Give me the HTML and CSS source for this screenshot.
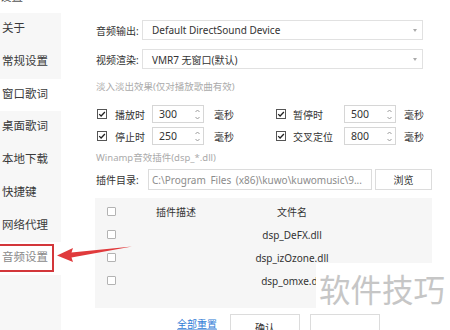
FILE: index.html
```html
<!DOCTYPE html>
<html lang="zh">
<head>
<meta charset="utf-8">
<link rel="stylesheet" href="styles.css">
</head>
<body>
<div class="app">
  <aside class="sidebar">
    <div class="cut-title"><span>设置</span></div>
    <ul class="nav">
      <li class="nav-item">关于</li>
      <li class="nav-item">常规设置</li>
      <li class="nav-item light">窗口歌词</li>
      <li class="nav-item">桌面歌词</li>
      <li class="nav-item">本地下载</li>
      <li class="nav-item">快捷键</li>
      <li class="nav-item">网络代理</li>
      <li class="nav-item active">音频设置</li>
    </ul>
  </aside>

  <main class="content">
    <div class="field-row">
      <span class="label">音频输出:</span>
      <div class="select"><span>Default DirectSound Device</span><i class="caret"></i></div>
    </div>
    <div class="field-row second">
      <span class="label">视频渲染:</span>
      <div class="select"><span>VMR7 无窗口(默认)</span><i class="caret"></i></div>
    </div>

    <div class="hint fade-hint">淡入淡出效果(仅对播放歌曲有效)</div>

    <div class="spin-row">
      <div class="spin-group g1">
        <svg class="cb" width="10" height="10" viewBox="0 0 10 10"><rect x="0.5" y="0.5" width="9" height="9" fill="#fff" stroke="#555"/><path d="M2.2 5.1l1.9 1.9 3.8-4" stroke="#222" stroke-width="1.3" fill="none"/></svg>
        <span class="spin-label">播放时</span>
        <div class="spin"><span>300</span><span class="arrows"><svg width="5" height="11" viewBox="0 0 5 11"><path d="M0.5 3l2-2 2 2M0.5 8l2 2 2-2" stroke="#9a9a9a" fill="none"/></svg></span></div>
        <span class="unit">毫秒</span>
      </div>
      <div class="spin-group g2">
        <svg class="cb" width="10" height="10" viewBox="0 0 10 10"><rect x="0.5" y="0.5" width="9" height="9" fill="#fff" stroke="#555"/><path d="M2.2 5.1l1.9 1.9 3.8-4" stroke="#222" stroke-width="1.3" fill="none"/></svg>
        <span class="spin-label">暂停时</span>
        <div class="spin"><span>500</span><span class="arrows"><svg width="5" height="11" viewBox="0 0 5 11"><path d="M0.5 3l2-2 2 2M0.5 8l2 2 2-2" stroke="#9a9a9a" fill="none"/></svg></span></div>
        <span class="unit">毫秒</span>
      </div>
    </div>
    <div class="spin-row second">
      <div class="spin-group g1">
        <svg class="cb" width="10" height="10" viewBox="0 0 10 10"><rect x="0.5" y="0.5" width="9" height="9" fill="#fff" stroke="#555"/><path d="M2.2 5.1l1.9 1.9 3.8-4" stroke="#222" stroke-width="1.3" fill="none"/></svg>
        <span class="spin-label">停止时</span>
        <div class="spin"><span>250</span><span class="arrows"><svg width="5" height="11" viewBox="0 0 5 11"><path d="M0.5 3l2-2 2 2M0.5 8l2 2 2-2" stroke="#9a9a9a" fill="none"/></svg></span></div>
        <span class="unit">毫秒</span>
      </div>
      <div class="spin-group g2">
        <svg class="cb" width="10" height="10" viewBox="0 0 10 10"><rect x="0.5" y="0.5" width="9" height="9" fill="#fff" stroke="#555"/><path d="M2.2 5.1l1.9 1.9 3.8-4" stroke="#222" stroke-width="1.3" fill="none"/></svg>
        <span class="spin-label">交叉定位</span>
        <div class="spin"><span>800</span><span class="arrows"><svg width="5" height="11" viewBox="0 0 5 11"><path d="M0.5 3l2-2 2 2M0.5 8l2 2 2-2" stroke="#9a9a9a" fill="none"/></svg></span></div>
        <span class="unit">毫秒</span>
      </div>
    </div>

    <div class="hint winamp-hint">Winamp音效插件(dsp_*.dll)</div>

    <div class="dir-row">
      <span class="dir-label">插件目录:</span>
      <div class="path-input">C:\Program Files (x86)\kuwo\kuwomusic\9...</div>
      <div class="btn browse">浏览</div>
    </div>

    <div class="plugin-table">
      <div class="trow thead">
        <span class="cell c-check"><i class="box"></i></span>
        <span class="cell c-desc">插件描述</span>
        <span class="cell c-name">文件名</span>
      </div>
      <div class="trow">
        <span class="cell c-check"><i class="box"></i></span>
        <span class="cell c-desc"></span>
        <span class="cell c-name">dsp_DeFX.dll</span>
      </div>
      <div class="trow">
        <span class="cell c-check"><i class="box"></i></span>
        <span class="cell c-desc"></span>
        <span class="cell c-name">dsp_izOzone.dll</span>
      </div>
      <div class="trow">
        <span class="cell c-check"><i class="box"></i></span>
        <span class="cell c-desc"></span>
        <span class="cell c-name">dsp_omxe.dll</span>
      </div>
    </div>

    <div class="footer">
      <a class="reset-link">全部重置</a>
      <div class="btn ok">确认</div>
      <div class="btn cancel"></div>
    </div>
  </main>

  <div class="highlight-box"></div>
  <svg class="arrow" width="450" height="330" viewBox="0 0 450 330">
    <polygon points="57,255.5 73,248 71.5,252.5 132,246.5 71.5,257.5 73,262" fill="#e03a3c"/>
  </svg>
  <div class="watermark">软件技巧</div>
</div>
</body>
</html>
```

FILE: styles.css
```css
* { box-sizing: border-box; }
html, body { margin: 0; padding: 0; background: #fff; }
body {
  font-family: "Noto Sans", "Noto Sans CJK SC", sans-serif;
  font-size: 10px;
  color: #333;
}
.app {
  position: relative;
  width: 450px;
  height: 330px;
  display: flex;
  overflow: hidden;
}

/* sidebar */
.sidebar {
  width: 61px;
  flex: none;
  display: flex;
  flex-direction: column;
}
.cut-title {
  height: 13px;
  flex: none;
  overflow: hidden;
  font-size: 11.5px;
  background: #fff;
}
.cut-title span {
  display: block;
  margin-top: -9px;
  line-height: 12px;
  color: #555;
}
.nav {
  list-style: none;
  margin: 0;
  padding: 0;
  flex: 1;
  background: #f7f7f7;
}
.nav-item {
  height: 32.75px;
  line-height: 30px;
  padding-left: 2px;
  font-size: 11.5px;
  color: #3a3a3a;
  white-space: nowrap;
}
.nav-item.light { background: #fff; }
.nav-item.active { background: #fff; color: #8a8a8a; }

/* content */
.content {
  flex: 1;
  padding: 20px 0 0 35px;
  display: flex;
  flex-direction: column;
}
.content > * { flex-shrink: 0; }
.field-row {
  display: flex;
  align-items: center;
  height: 20px;
}
.field-row.second { margin-top: 9px; }
.label { width: 46px; flex: none; }
.select {
  width: 281px;
  height: 20px;
  border: 1px solid #e1e1e1;
  display: flex;
  align-items: center;
  padding-left: 9px;
  white-space: nowrap;
}
.caret {
  margin-left: auto;
  margin-right: 5px;
  width: 0;
  height: 0;
  border-left: 2.5px solid transparent;
  border-right: 2.5px solid transparent;
  border-top: 3px solid #aaa;
}

.hint {
  font-size: 9.5px;
  color: #aaa;
  height: 14px;
  line-height: 14px;
  white-space: nowrap;
}
.fade-hint { margin-top: 11px; }
.winamp-hint { margin-top: 6px; }

.spin-row {
  display: flex;
  align-items: center;
  height: 18px;
  margin-top: 11px;
}
.spin-row.second { margin-top: 4px; }
.spin-group { display: flex; align-items: center; }
.spin-group.g1 { width: 180px; }
.cb { flex: none; display: block; }
.g1 .cb { margin-left: 1px; }
.spin-label { white-space: nowrap; }
.g1 .spin-label { margin-left: 8px; width: 37px; }
.g2 .spin-label { margin-left: 7px; width: 51px; }
.spin {
  width: 52px;
  height: 18px;
  border: 1px solid #d6d6d6;
  display: flex;
  align-items: center;
  padding-left: 6px;
  font-size: 10.5px;
  color: #333;
}
.arrows { margin-left: auto; margin-right: 3px; display: flex; }
.arrows svg { display: block; }
.g1 .unit { margin-left: 10px; }
.g2 .unit { margin-left: 8px; }

.dir-row {
  display: flex;
  align-items: center;
  height: 21px;
  margin-top: 4px;
}
.dir-label { width: 52px; flex: none; }
.path-input {
  width: 224px;
  height: 21px;
  border: 1px solid #dcdcdc;
  padding-left: 3px;
  display: flex;
  align-items: center;
  color: #8c8c8c;
  white-space: nowrap;
  overflow: hidden;
  word-spacing: 2px;
}
.btn {
  border: 1px solid #dcdcdc;
  background: #fff;
  display: flex;
  align-items: center;
  justify-content: center;
  color: #333;
}
.browse { width: 57px; height: 21px; margin-left: 3px; }

.plugin-table {
  margin: 8px 0 0 -1px;
  width: 337px;
  height: 110px;
  background: #f6f6f6;
  padding-top: 2px;
}
.trow {
  display: grid;
  grid-template-columns: 30px 102px 130px;
  height: 23px;
  align-items: center;
}
.cell { white-space: nowrap; }
.c-check { padding-left: 12px; display: flex; align-items: center; }
.c-desc, .c-name { text-align: center; }
.box {
  display: block;
  width: 9px;
  height: 9px;
  border: 1px solid #b3b3b3;
  border-radius: 1px;
  background: #fff;
}

.footer {
  display: flex;
  align-items: flex-start;
  margin-top: 6px;
  padding-left: 81px;
}
.reset-link {
  color: #2f7bd6;
  text-decoration: underline;
  text-decoration-color: #8fb6e6;
  line-height: 20px;
  white-space: nowrap;
}
.ok { width: 70px; height: 24px; margin-left: 13px; padding-top: 3px; }
.cancel { width: 70px; height: 24px; margin-left: 10px; }

/* annotation overlays */
.highlight-box {
  position: absolute;
  left: -3px;
  top: 244px;
  width: 57px;
  height: 28px;
  border: 2px solid #d3363a;
}
.arrow {
  position: absolute;
  left: 0;
  top: 0;
  pointer-events: none;
}
.watermark {
  position: absolute;
  left: 316px;
  top: 263px;
  width: 134px;
  height: 47px;
  background: #fff;
  color: #c6c6c6;
  font-size: 31.5px;
  line-height: 31px;
  padding: 11px 0 0 3px;
  white-space: nowrap;
}
```
